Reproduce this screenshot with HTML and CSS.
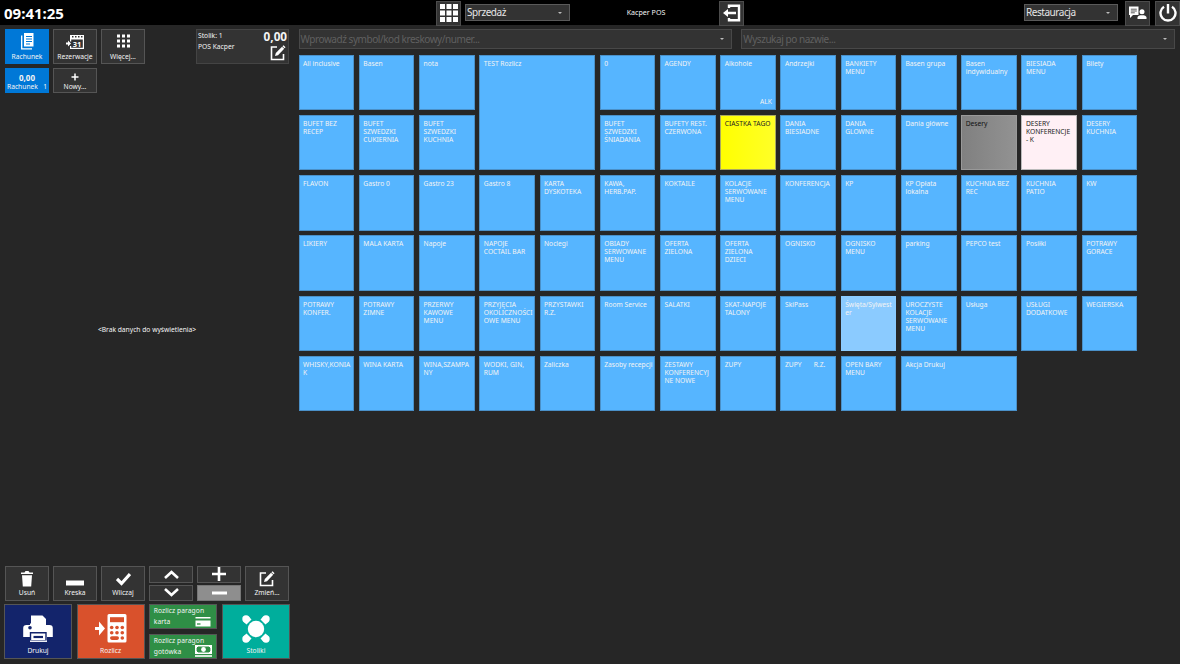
FILE: index.html
```
<!DOCTYPE html>
<html lang="pl">
<head>
<meta charset="utf-8">
<title>Kacper POS</title>
<link rel="stylesheet" href="styles.css">
</head>
<body>
<header class="topbar">
  <div class="clock">09:41:25</div>
  <div class="top-center">
    <button class="sq"><svg width="18" height="18" viewBox="0 0 18 18" fill="#fff"><path d="M0 0h5v5H0zM6.500 0h5v5h-5zM13 0h5v5h-5zM0 6.500h5v5H0zM6.500 6.500h5v5h-5zM13 6.500h5v5h-5zM0 13h5v5H0zM6.500 13h5v5h-5zM13 13h5v5h-5z"/></svg></button>
    <div class="select select-mode"><span>Sprzedaż</span><i class="caret"></i></div>
    <div class="operator">Kacper POS</div>
    <button class="sq"><svg width="18" height="18" viewBox="0 0 18 18" fill="none" stroke="#fff" stroke-width="2.400"><path d="M6 4V1.700h10v14.600H6V14M4 9h9"/><path d="M0 9l5-4v8z" fill="#fff" stroke="none"/></svg></button>
  </div>
  <div class="top-right">
    <div class="select select-place"><span>Restauracja</span><i class="caret"></i></div>
    <button class="sq"><svg width="19" height="18" viewBox="0 0 19 18"><path fill="#fff" d="M1 2.500h9.500v8.500H5l-3 3v-3H1z"/><path fill="#fff" d="M9.500 15v-1.500c0-1.700 2-2.300 4.500-2.300s4.500.6 4.500 2.300V15z"/><circle cx="14" cy="7.800" r="2.500" fill="#fff"/><path d="M2.800 5.200h6M2.800 7h6M2.800 8.800h4" stroke="#333" stroke-width=".8"/></svg></button>
    <button class="sq sq-last"><svg width="18" height="18" viewBox="0 0 18 18" fill="none" stroke="#fff" stroke-width="2.400"><path d="M5 2.700a7.500 7.500 0 1 0 8 0M9 0v9.500"/></svg></button>
  </div>
</header>
<div class="main">
  <aside class="side">
    <div class="row row-head">
      <button class="btn active"><svg width="13" height="17" viewBox="0 0 13 17"><path d="M3 0h9.500v13.500H3z" fill="#fff"/><path d="M.7 2.500v13.300H11" fill="none" stroke="#fff" stroke-width="1.300"/><path d="M5 3.500h6M5 6h6M5 8.500h6M5 11h4" stroke="#0078d7" stroke-width="1"/></svg><span>Rachunek</span></button>
      <button class="btn"><svg class="cal" width="18" height="16" viewBox="0 0 18 16"><path fill="#fff" d="M4 1h14v4.500H4z"/><path fill="none" stroke="#fff" stroke-width="1.200" d="M4.600 5v2.500M4.600 12v2.400h12.800V5"/><path fill="#fff" d="M0 8.500h2V6.500l3 3-3 3v-2H0z"/><path d="M6 2.800h10.500" stroke="#333" stroke-width="1.400" stroke-dasharray="1.500 1.500"/><text x="6.800" y="12.800" class="cal-num">31</text></svg><span>Rezerwacje</span></button>
      <button class="btn"><svg width="13" height="16" viewBox="0 0 13 16"><path d="M0 2h13M0 7h13M0 12h13" stroke="#fff" stroke-width="3" stroke-dasharray="3 2"/></svg><span>Więcej...</span></button>
      <div class="table-card">
        <div class="table-info"><div>Stolik: 1</div><div>POS Kacper</div></div>
        <div class="table-sum"><b>0,00</b><svg width="16" height="16" viewBox="0 0 16 16" fill="none" stroke="#fff" stroke-width="1.600"><path d="M7 2H1.500v12.500h12V9"/><path d="M5 11l.8-3L12 1.800l2.200 2L8 10.200z" fill="#fff" stroke="none"/><path d="M13 .8l2 2"/></svg></div>
      </div>
    </div>
    <div class="row row-bills">
      <button class="btn small active"><b>0,00</b><span class="bill"><i>Rachunek</i><i>1</i></span></button>
      <button class="btn small"><svg width="8" height="9" viewBox="0 0 8 9"><path d="M.5 4h7M4 .5v7" stroke="#fff" stroke-width="1.500"/></svg><span>Nowy...</span></button>
    </div>
    <div class="empty">&lt;Brak danych do wyświetlenia&gt;</div>
    <div class="row row-tools">
      <button class="btn"><svg width="12" height="16" viewBox="0 0 12 16" fill="#fff"><path d="M0 1.500h3.500L4.500 0h3l1 1.500H12V3H0zM1 4.200h10L10.200 15.500H1.800z"/></svg><span>Usuń</span></button>
      <button class="btn"><svg width="18" height="16" viewBox="0 0 18 16"><path d="M0 9.500h18v5H0z" fill="#fff"/></svg><span>Kreska</span></button>
      <button class="btn"><svg width="15" height="16" viewBox="0 0 15 16"><path d="M1 8l4.500 4.500L14 3" fill="none" stroke="#fff" stroke-width="3.200"/></svg><span>Wliczaj</span></button>
      <div class="split">
        <button class="btn half"><svg width="15" height="9" viewBox="0 0 15 9"><path d="M1 8l6.500-6L14 8" fill="none" stroke="#fff" stroke-width="2.600"/></svg></button>
        <button class="btn half"><svg width="15" height="9" viewBox="0 0 15 9"><path d="M1 1l6.500 6L14 1" fill="none" stroke="#fff" stroke-width="2.600"/></svg></button>
      </div>
      <div class="split">
        <button class="btn half"><svg width="14" height="14" viewBox="0 0 14 14"><path d="M0 7h14M7 0v14" stroke="#fff" stroke-width="2.600"/></svg></button>
        <button class="btn half off"><svg width="15" height="4" viewBox="0 0 15 4"><path d="M0 2h15" stroke="#fff" stroke-width="3"/></svg></button>
      </div>
      <button class="btn"><svg width="16" height="16" viewBox="0 0 16 16" fill="none" stroke="#fff" stroke-width="1.600"><path d="M7 2H1.500v12.500h12V9"/><path d="M5 11l.8-3L12 1.800l2.200 2L8 10.200z" fill="#fff" stroke="none"/><path d="M13 .8l2 2"/></svg><span>Zmień...</span></button>
    </div>
    <div class="row row-actions">
      <button class="big navy"><svg width="30" height="28" viewBox="0 0 30 28"><path fill="#fff" d="M8 .5h11.500L23 4v5H8z"/><path fill="#fff" d="M3.500 10H7V8.500h16V10h3.500a3.300 3.300 0 0 1 3.300 3.300V22H24v4.500H7V22H.2v-8.700A3.300 3.300 0 0 1 3.500 10z"/><path d="M7.500 17.800h15.500v8H7.500z" fill="#fff" stroke="#13246b" stroke-width="1.400"/><path d="M7 26.200h17" stroke="#fff" stroke-width="1.400"/><path d="M10.500 22h9.500" stroke="#13246b" stroke-width="2.200"/><circle cx="7" cy="12.700" r="1.800" fill="#13246b"/></svg><span>Drukuj</span></button>
      <button class="big orange"><svg width="32" height="29" viewBox="0 0 32 29"><path fill="#fff" d="M14 0h16a1.500 1.500 0 0 1 1.500 1.500v25.500A1.500 1.500 0 0 1 30 28.500H14a1.500 1.500 0 0 1-1.500-1.500v-25.500A1.500 1.500 0 0 1 14 0zM0 13h4V7.500l6 7-6 7V16H0z"/><path d="M15 3.200h14v5H15z" fill="#d9512c"/><g fill="#d9512c"><circle cx="16.700" cy="13.500" r="1.800"/><circle cx="22" cy="13.500" r="1.800"/><circle cx="27.300" cy="13.500" r="1.800"/><circle cx="16.700" cy="18.700" r="1.800"/><circle cx="22" cy="18.700" r="1.800"/><circle cx="27.300" cy="18.700" r="1.800"/><rect x="15" y="22.300" width="9" height="3.600" rx="1.800"/><circle cx="27.300" cy="24" r="1.800"/></g></svg><span>Rozlicz</span></button>
      <div class="pay">
        <button class="green"><span>Rozlicz paragon<br>karta</span><svg width="16" height="10" viewBox="0 0 16 10"><path fill="#fff" d="M.5 0h15v1.600H.5zM.5 3.500h15v6H.5z"/><path d="M2 7h3.500" stroke="#2f8f46" stroke-width="1.300"/></svg></button>
        <button class="green"><span>Rozlicz paragon<br>gotówka</span><svg width="17" height="12" viewBox="0 0 17 12"><path d="M.8.800h15.400v7.400H.8z" fill="#2f8f46" stroke="#fff" stroke-width="1.600"/><circle cx="8.500" cy="4.500" r="2.400" fill="#fff"/><path d="M1 3l2-2H1zM16 3l-2-2h2zM1 6l2 2H1zM16 6l-2 2h2z" fill="#fff" stroke="#fff"/><path d="M0 11h17" stroke="#fff" stroke-width="1.600"/></svg></button>
      </div>
      <button class="big teal"><svg width="28" height="28" viewBox="0 0 28 28" fill="#fff"><circle cx="14" cy="14" r="8.200"/><g id="chair"><circle cx="4" cy="4" r="3.700"/><path d="M1.500 6.700L4.500 9.500 9.500 4.500 6.700 1.500z"/></g><use href="#chair" transform="rotate(90 14 14)"/><use href="#chair" transform="rotate(180 14 14)"/><use href="#chair" transform="rotate(270 14 14)"/></svg><span>Stoliki</span></button>
    </div>
  </aside>
  <section class="content">
    <div class="search">
      <div class="select field"><span>Wprowadź symbol/kod kreskowy/numer...</span><i class="caret"></i></div>
      <div class="select field"><span>Wyszukaj po nazwie...</span><i class="caret"></i></div>
    </div>
    <div class="tiles">
      <div class="tile">All inclusive</div>
      <div class="tile">Basen</div>
      <div class="tile">nota</div>
      <div class="tile wide tall">TEST Rozlicz</div>
      <div class="tile">0</div>
      <div class="tile">AGENDY</div>
      <div class="tile coded">Alkohole<span>ALK</span></div>
      <div class="tile">Andrzejki</div>
      <div class="tile">BANKIETY MENU</div>
      <div class="tile">Basen grupa</div>
      <div class="tile">Basen indywidualny</div>
      <div class="tile">BIESIADA MENU</div>
      <div class="tile">Bilety</div>

      <div class="tile">BUFET BEZ RECEP</div>
      <div class="tile">BUFET SZWEDZKI CUKIERNIA</div>
      <div class="tile">BUFET SZWEDZKI KUCHNIA</div>
      <div class="tile">BUFET SZWEDZKI ŚNIADANIA</div>
      <div class="tile">BUFETY REST. CZERWONA</div>
      <div class="tile yellow">CIASTKA TAGO</div>
      <div class="tile">DANIA BIESIADNE</div>
      <div class="tile">DANIA GLOWNE</div>
      <div class="tile">Dania główne</div>
      <div class="tile gray">Desery</div>
      <div class="tile pink">DESERY KONFERENCJE<br>- K</div>
      <div class="tile">DESERY KUCHNIA</div>

      <div class="tile">FLAVON</div>
      <div class="tile">Gastro 0</div>
      <div class="tile">Gastro 23</div>
      <div class="tile">Gastro 8</div>
      <div class="tile">KARTA DYSKOTEKA</div>
      <div class="tile">KAWA, HERB.PAP.</div>
      <div class="tile">KOKTAILE</div>
      <div class="tile">KOLACJE SERWOWANE MENU</div>
      <div class="tile">KONFERENCJA</div>
      <div class="tile">KP</div>
      <div class="tile">KP Opłata lokalna</div>
      <div class="tile">KUCHNIA BEZ REC</div>
      <div class="tile">KUCHNIA PATIO</div>
      <div class="tile">KW</div>

      <div class="tile">LIKIERY</div>
      <div class="tile">MALA KARTA</div>
      <div class="tile">Napoje</div>
      <div class="tile">NAPOJE COCTAIL BAR</div>
      <div class="tile">Noclegi</div>
      <div class="tile">OBIADY SERWOWANE MENU</div>
      <div class="tile">OFERTA ZIELONA</div>
      <div class="tile">OFERTA ZIELONA DZIECI</div>
      <div class="tile">OGNISKO</div>
      <div class="tile">OGNISKO MENU</div>
      <div class="tile">parking</div>
      <div class="tile">PEPCO test</div>
      <div class="tile">Posiłki</div>
      <div class="tile">POTRAWY GORACE</div>

      <div class="tile">POTRAWY KONFER.</div>
      <div class="tile">POTRAWY ZIMNE</div>
      <div class="tile">PRZERWY KAWOWE MENU</div>
      <div class="tile">PRZYJĘCIA OKOLICZNOŚCI<br>OWE MENU</div>
      <div class="tile">PRZYSTAWKI R.Z.</div>
      <div class="tile">Room Service</div>
      <div class="tile">SALATKI</div>
      <div class="tile">SKAT-NAPOJE TALONY</div>
      <div class="tile">SkiPass</div>
      <div class="tile light">Święta/Sylwest<br>er</div>
      <div class="tile">UROCZYSTE KOLACJE SERWOWANE MENU</div>
      <div class="tile">Usługa</div>
      <div class="tile">USŁUGI DODATKOWE</div>
      <div class="tile">WEGIERSKA</div>

      <div class="tile">WHISKY,KONIA<br>K</div>
      <div class="tile">WINA KARTA</div>
      <div class="tile">WINA,SZAMPA<br>NY</div>
      <div class="tile">WODKI, GIN, RUM</div>
      <div class="tile">Zaliczka</div>
      <div class="tile">Zasoby recepcji</div>
      <div class="tile">ZESTAWY KONFERENCYJ<br>NE NOWE</div>
      <div class="tile">ZUPY</div>
      <div class="tile pre">ZUPY       R.Z.</div>
      <div class="tile">OPEN BARY MENU</div>
      <div class="tile wide">Akcja Drukuj</div>
    </div>
  </section>
</div>
</body>
</html>
```
FILE: styles.css
```
* { box-sizing: border-box; }
body {
  margin: 0;
  width: 1180px;
  height: 664px;
  overflow: hidden;
  display: flex;
  flex-direction: column;
  background: #262626;
  color: #f4f4f4;
  font: 6.7px/8px "Noto Sans", "Open Sans", sans-serif;
}
button { font: inherit; color: inherit; margin: 0; padding: 0; }
svg { display: block; flex: none; }
i { font-style: normal; }

.topbar {
  height: 25px;
  background: #000;
  display: grid;
  grid-template-columns: 436px 1fr auto;
}
.clock { padding-left: 4px; font: bold 15px/26px "Noto Sans", sans-serif; color: #fff; }
.top-center, .top-right { display: flex; align-items: center; }
.sq {
  width: 25px;
  height: 25px;
  background: #333;
  border: 1px solid #4c4c4c;
  display: flex;
  align-items: center;
  justify-content: center;
}
.select {
  display: flex;
  align-items: center;
  justify-content: space-between;
  background: #333;
  border: 1px solid #5a5a5a;
  padding: 0 7px 0 1px;
  font-size: 10px;
  letter-spacing: -.45px;
  line-height: 15px;
  white-space: nowrap;
  color: #e6e6e6;
}
.caret {
  border: 2px solid transparent;
  border-top-color: #bbb;
  border-bottom: 0;
}
.select-mode { width: 105px; height: 17px; margin: 0 0 1px 4px; }
.operator { width: 149px; padding: 0 0 2px 3px; text-align: center; font-size: 7.1px; }
.select-place { width: 94px; height: 17px; margin: 0 7px 1px 0; }
.sq-last { margin-left: 5px; }

.main { flex: 1; display: flex; min-height: 0; }
.side {
  width: 298px;
  padding: 4px 9px 5px 5px;
  display: flex;
  flex-direction: column;
}
.row { display: flex; gap: 4px; }
.btn {
  width: 44px;
  height: 35px;
  background: #333;
  border: 1px solid #555;
  display: flex;
  flex-direction: column;
  align-items: center;
  justify-content: flex-end;
  gap: 2px;
  padding-bottom: 3px;
  white-space: nowrap;
}
.row-head .btn { gap: 3px; padding-bottom: 2px; }
.active { background: #0078d7; border-color: #0078d7; }
.cal-num { font: bold 7.500px "Noto Sans", sans-serif; fill: #fff; }
.table-card {
  width: 93px;
  height: 35px;
  margin-left: auto;
  background: #333;
  border: 1px solid #444;
  display: flex;
  justify-content: space-between;
  padding: 0 1px 0;
}
.table-info { line-height: 11px; }
.table-sum { display: flex; flex-direction: column; align-items: flex-end; gap: 3px; }
.table-sum b { font-size: 11.700px; line-height: 12px; }
.table-sum svg { margin-right: 1px; }
.row-bills { margin-top: 4px; }
.row .small { height: 25px; gap: 1px; padding-bottom: 1px; }
.small b { font-size: 8px; line-height: 9px; }
.bill { display: flex; justify-content: space-between; width: 40px; }
.empty {
  flex: 1;
  display: flex;
  align-items: center;
  justify-content: center;
}
.row-tools { margin-bottom: 3px; }
.split { display: flex; flex-direction: column; gap: 2px; }
.half { height: 16.500px; justify-content: center; padding: 0; }
.off { background: #8e8e8e; border-color: #777; }
.row-actions { margin: 0 -1px; gap: 0; justify-content: space-between; }
.big {
  width: 68px;
  height: 55px;
  border: 1px solid #555;
  display: flex;
  flex-direction: column;
  align-items: center;
  justify-content: flex-end;
  gap: 4px;
  padding-bottom: 3.500px;
}
.navy { background: #13246b; }
.orange { background: #d9512c; }
.teal { background: #00ae9c; }
.pay { display: flex; flex-direction: column; justify-content: space-between; width: 68px; }
.green {
  height: 25px;
  border: 1px solid #555;
  background: #2f8f46;
  display: grid;
  grid-template-columns: 1fr auto;
  text-align: left;
  line-height: 11px;
  padding: 0 6px 3px 3.500px;
}
.green span { white-space: nowrap; width: 41px; margin-top: -.5px; letter-spacing: .06px; }
.green svg { align-self: end; }

.content { flex: 1; padding: 4px 5px 0 .6px; }
.search { display: flex; gap: 9px; }
.field { flex: 1; height: 20px; color: #606060; border-color: #484848; }
.tiles {
  margin-top: 5.600px;
  display: grid;
  grid-template-columns: repeat(14, 55.600px);
  grid-auto-rows: 55.600px;
  gap: 4.650px;
}
.tile {
  background: #56b5ff;
  border: 1px solid #4a90c8;
  padding: 4px 0 0 3.500px;
  white-space: normal;
  overflow: hidden;
}
.wide { grid-column: span 2; }
.tall { grid-row: span 2; }
.pre { white-space: pre; }
.coded { display: flex; flex-direction: column; justify-content: space-between; padding-bottom: 3px; }
.coded span { text-align: right; padding-right: 3px; }
.yellow { background: linear-gradient(90deg, #ff0, #ffff28); border-color: #aaa960; color: #222; }
.gray { background: linear-gradient(90deg, #808080, #929292); border-color: #999; color: #111; }
.pink { background: #fff0f5; border-color: #bbb; color: #222; }
.light { background: #8bcbff; border-color: #8bcbff; }
```
